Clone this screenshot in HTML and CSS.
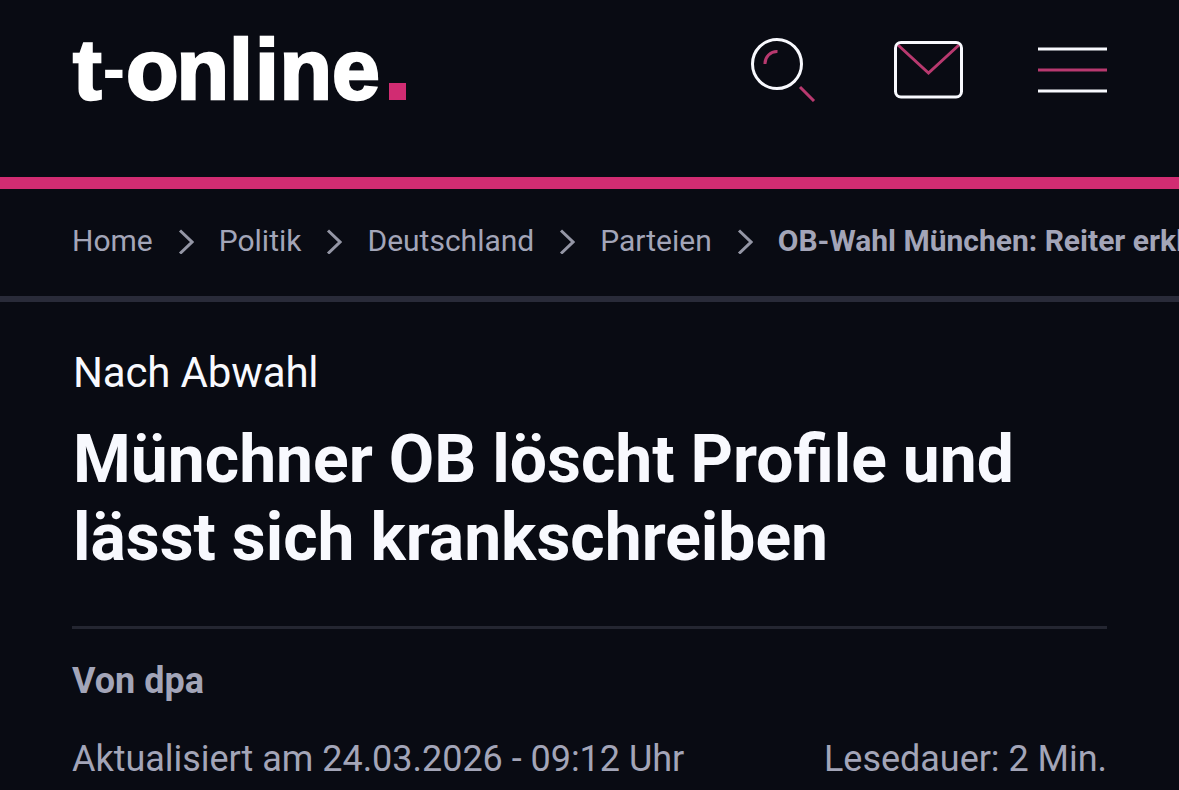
FILE: index.html
```html
<!DOCTYPE html>
<html lang="de">
<head>
<meta charset="utf-8">
<title>Münchner OB löscht Profile und lässt sich krankschreiben</title>
<link rel="stylesheet" href="styles.css">
</head>
<body>
<header class="header">
  <a class="logo" aria-label="t-online"><span class="t">t</span><span class="dash">-</span><span class="o">o</span><span class="n">n</span><span class="l">l</span><span class="i">i</span><span class="n">n</span><span class="e">e</span><span class="dot"></span></a>
  <nav class="icons">
    <svg width="68" height="66" viewBox="0 0 68 66">
      <circle cx="26" cy="28" r="24.500"/>
      <path class="pink" d="M14 28a12 12 0 0 1 12.500-12.500M49 51l14 14"/>
    </svg>
    <svg width="69" height="66" viewBox="0 0 69 66">
      <path class="pink" d="M4 9l30.500 28L65 9"/>
      <rect x="1.500" y="6.500" width="66" height="54.500" rx="5.500"/>
    </svg>
    <svg width="69" height="66" viewBox="0 0 69 66">
      <path d="M0 13h69M0 55h69"/>
      <path class="pink" d="M0 34h69"/>
    </svg>
  </nav>
</header>

<nav class="breadcrumb">
  <a>Home</a>
  <svg width="16" height="26" viewBox="0 0 16 26"><path d="M2 2.500L14 14 2 25.500"/></svg>
  <a>Politik</a>
  <svg width="16" height="26" viewBox="0 0 16 26"><path d="M2 2.500L14 14 2 25.500"/></svg>
  <a>Deutschland</a>
  <svg width="16" height="26" viewBox="0 0 16 26"><path d="M2 2.500L14 14 2 25.500"/></svg>
  <a>Parteien</a>
  <svg width="16" height="26" viewBox="0 0 16 26"><path d="M2 2.500L14 14 2 25.500"/></svg>
  <b>OB-Wahl München: Reiter erkl</b>
</nav>

<main class="article">
  <p class="kicker">Nach Abwahl</p>
  <h1>Münchner OB löscht Profile und<br>lässt sich krankschreiben</h1>
  <div class="author">Von dpa</div>
  <div class="meta">
    <span class="date">Aktualisiert am 24.03.2026 - 09:12 Uhr</span>
    <span class="readtime">Lesedauer: 2 Min.</span>
  </div>
</main>
</body>
</html>
```
FILE: styles.css
```css
* {
  box-sizing: border-box;
}
body {
  margin: 0;
  height: 790px;
  overflow: hidden;
  background: #090b13;
  color: #f8f9fe;
  font-family: Roboto, sans-serif;
}
svg {
  display: block;
  flex: none;
  fill: none;
  stroke: #f8f9fe;
  stroke-width: 3;
}
.header {
  display: flex;
  justify-content: space-between;
  height: 189px;
  padding: 23px 72px 0 73px;
  border-bottom: 12px solid #d12c72;
}
.logo {
  display: flex;
  height: 92px;
  color: #fff;
  font: bold 86px/92px "Liberation Sans", sans-serif;
  -webkit-text-stroke: 2.5px #fff;
}
.logo span {
  flex: none;
}
.logo .t {
  width: 29.500px;
}
.logo .dash {
  width: 23.500px;
  font-size: 68px;
  line-height: 90px;
  -webkit-text-stroke: 0;
}
.logo .o {
  width: 50.500px;
}
.logo .n {
  width: 52.500px;
}
.logo .l {
  width: 26px;
}
.logo .i {
  width: 24.500px;
}
.logo .e {
  width: 48px;
}
.logo .dot {
  align-self: flex-end;
  width: 17px;
  height: 17px;
  margin: 0 0 15px 9px;
  background: #d12c72;
}
.icons {
  display: flex;
  gap: 75px;
  padding-top: 13px;
}
.pink {
  stroke: #b8396f;
}
.breadcrumb {
  display: flex;
  align-items: center;
  height: 113px;
  padding: 0 0 4px 72px;
  border-bottom: 6px solid #292b39;
  color: #a3a5b8;
  font-size: 30px;
  white-space: nowrap;
  gap: 25px;
}
.breadcrumb svg {
  stroke: #9496a5;
}
.article {
  padding: 46px 72px 0 73px;
}
.kicker {
  margin: 0;
  font-size: 42px;
  letter-spacing: -0.15px;
  line-height: 50px;
}
h1 {
  margin: 23px 0 0;
  font-size: 66px;
  font-weight: 700;
  font-variant-ligatures: common-ligatures;
  letter-spacing: 0;
  word-spacing: -0.500px;
  line-height: 78px;
  white-space: nowrap;
}
.author {
  margin: 49px 0 0 -1px;
  padding-top: 31px;
  border-top: 3px solid #242631;
  color: #a3a5b8;
  font-size: 36px;
  font-weight: bold;
  line-height: 42px;
}
.meta {
  display: flex;
  justify-content: space-between;
  margin: 36px 0 0 -1px;
  color: #a3a5b8;
  font-size: 36px;
  letter-spacing: -0.03px;
  line-height: 42px;
  white-space: nowrap;
}
```
